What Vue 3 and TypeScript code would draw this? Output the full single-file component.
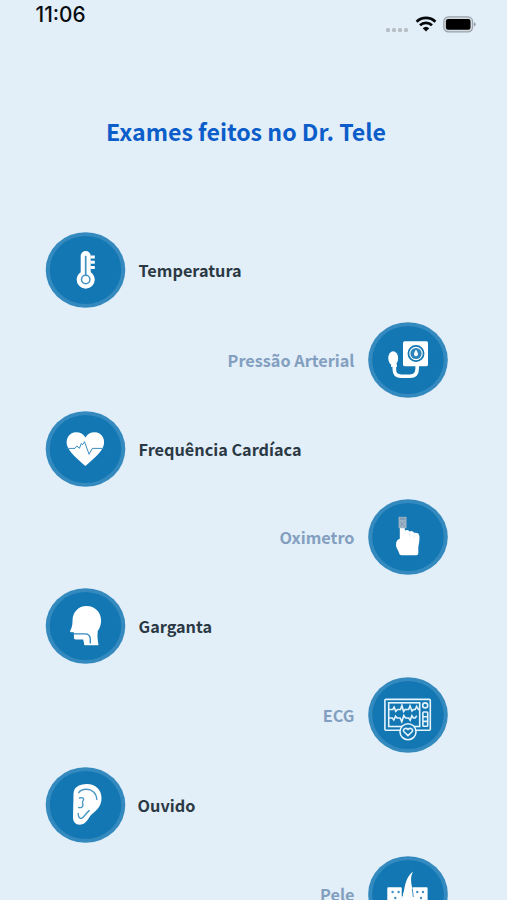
<script setup lang="ts">
type Side = 'left' | 'right'
type Kind = 'temperature' | 'pressure' | 'heart' | 'oximeter' | 'throat' | 'ecg' | 'ear' | 'skin'

interface Exam {
  kind: Kind
  label: string
  side: Side
}

const exams: Exam[] = [
  { kind: 'temperature', label: 'Temperatura', side: 'left' },
  { kind: 'pressure', label: 'Pressão Arterial', side: 'right' },
  { kind: 'heart', label: 'Frequência Cardíaca', side: 'left' },
  { kind: 'oximeter', label: 'Oximetro', side: 'right' },
  { kind: 'throat', label: 'Garganta', side: 'left' },
  { kind: 'ecg', label: 'ECG', side: 'right' },
  { kind: 'ear', label: 'Ouvido', side: 'left' },
  { kind: 'skin', label: 'Pele', side: 'right' },
]
</script>

<template>
  <main class="screen">
    <header class="status">
      <time class="clock">11:06</time>
      <div class="indicators">
        <span class="dots"><i v-for="n in 4" :key="n" class="dot" /></span>
        <svg class="wifi" viewBox="0 0 22 16">
          <path d="M1.6 5.7a13.6 13.6 0 0 1 18.8 0M5 9.3a8.7 8.7 0 0 1 12 0" fill="none" stroke="#05080b" stroke-width="2.7" />
          <path d="M11 15.6 7.7 12.2a4.8 4.8 0 0 1 6.6 0z" fill="#05080b" />
        </svg>
        <svg class="battery" viewBox="0 0 33 17">
          <rect x=".8" y=".8" width="28.8" height="15" rx="4.6" fill="#d3dbe2" stroke="#9ba2a8" stroke-width="1.2" />
          <rect x="2.9" y="2.9" width="24.6" height="10.8" rx="2.2" fill="#000" />
          <path d="M31 6.2q1.6.6 1.6 2.1T31 10.4z" fill="#8e959b" />
        </svg>
      </div>
    </header>

    <h1 class="title">Exames feitos no Dr. Tele</h1>

    <ul class="exams">
      <li v-for="exam in exams" :key="exam.kind" class="exam" :class="[exam.side, exam.kind]">
        <svg class="disc" viewBox="0 0 80 76">
          <ellipse cx="40" cy="38" rx="39.8" ry="37.8" fill="#348abf" />
          <ellipse cx="40" cy="38" rx="35.8" ry="34" fill="#1277b3" />

          <g v-if="exam.kind === 'temperature'">
            <path d="M35.2 24a5 5 0 0 1 10 0v16.2a9 9 0 1 1-10 0z" fill="#fff" />
            <path d="M45 25h4.3M45 30.2h4.3M45 35.5h4.3" stroke="#fff" stroke-width="2.9" />
            <path d="M40.2 24.5v18.3" stroke="#4392c3" stroke-width="1.7" stroke-linecap="round" />
            <circle cx="40.2" cy="47.5" r="4.2" fill="#fff" stroke="#4392c3" stroke-width="1.5" />
          </g>

          <g v-else-if="exam.kind === 'pressure'">
            <rect x="35" y="19.2" width="25" height="25" rx="1.6" fill="#fff" />
            <circle cx="48" cy="31.5" r="7.6" fill="#fff" stroke="#1277b3" stroke-width="1.7" />
            <circle cx="48" cy="31.5" r="5.6" fill="#2c84ba" />
            <path d="M48 27.4c1.3 2.4 2 3.4 2 4.9a2 2 0 0 1-4 0c0-1.5.7-2.5 2-4.9z" fill="#fff" />
            <ellipse cx="25.2" cy="36.2" rx="4.9" ry="7" fill="#fff" />
            <path d="M26.3 41v6.2q0 7 7 7H42q7.2 0 7.2-8V43" fill="none" stroke="#fff" stroke-width="3.6" />
            <path d="M23 43.6h6" stroke="#fff" stroke-width="2.6" />
          </g>

          <g v-else-if="exam.kind === 'heart'">
            <path d="M39.9 55C37 52.2 25.6 43.4 22.4 36.5 18.8 28.8 23.5 21.2 30.6 21.2c4.1 0 7.4 1.9 9.3 5.2 1.9-3.3 5.2-5.2 9.3-5.2 7.1 0 11.8 7.6 8.2 15.3C54.2 43.4 42.8 52.2 39.9 55z" fill="#fff" />
            <path d="M21 37.4h8.500l1.800-2.500 2.600 2.400 1.900-4.800 1.200 1.400 2-3.200 4.600 12.600 3.200-5.900h12" fill="none" stroke="#3a8dc1" stroke-width="1" />
          </g>

          <g v-else-if="exam.kind === 'oximeter'">
            <path d="M31.8 29q2.5-1.2 5 0v2.600q2.900-1.400 4.800.8 3-1.200 4.500 1.400 5.400-.6 5.400 4.200c0 6-1.200 8.400-1.200 12v4.300q0 1.900-1.900 1.900H33.300q-1.700 0-2.200-1.900c-.5-3.100-3.100-4.600-3.100-8.500 0-3.200 1.300-5.200 3.800-6z" fill="#fff" />
            <rect x="30.6" y="17.8" width="7.9" height="11.4" fill="#9db3c4" />
            <rect x="32" y="18.6" width="5.3" height="2.3" fill="#7f9db5" />
            <path d="M32 27.3l4.800-5.100M32.300 23l4.600 4.700" stroke="#7e9db7" stroke-width="1" />
            <path d="M41.700 34v3.500M46.200 35.500V39" stroke="#c2ddee" stroke-width=".6" />
          </g>

          <g v-else-if="exam.kind === 'throat'">
            <path d="M27 33C27 24 33 18 41 18c8.500 0 14.600 6.300 14.600 14.600 0 4.500-1.300 7.300-3.300 10.500-.7 4.800-.1 8.700.7 14.200H38.900c-.6-1.900-.5-4-1.300-5.800H30q-1.600 0-1.600-1.700V44.300h-2.600q-1.700 0-1.100-1.500C26.300 39.400 27 37.500 27 33z" fill="#fff" />
            <path d="M28 45.900h11.500q4.900 0 5.300 4.900v4.600" fill="none" stroke="#3489bd" stroke-width="1.400" />
          </g>

          <g v-else-if="exam.kind === 'ecg'" fill="none" stroke="#e4f3fc" stroke-width="1.600">
            <rect x="16.900" y="22.400" width="45.400" height="30.800" rx="1" />
            <rect x="20.700" y="25.800" width="31" height="23.700" />
            <path d="M21 32.500h3.800l1.300-2.400 1.700 4.200 1.700-1.800h3l1.400-4 1.700 6 1.500-2h3.500l1.400-3.600 2 5.200 1.400-1.600h1.800l1.400-3 1.800 3h1.300M21 41h3.300l1.500 2 1.800-3.700 1.500 1.700h3l1.700 3.700 2-6.100 1.700 2.400h3.200l1.500 2.200 1.700-4.400 1.500 2.200h1.700l1.700-2.200" />
            <circle cx="57.200" cy="28.400" r="2.500" />
            <rect x="54.900" y="35" width="4.800" height="14.200" rx=".8" />
            <path d="M55 39.700h4.700M55 44.400h4.700" />
            <circle cx="40" cy="54.700" r="8" fill="#1277b3" />
            <path d="M40 58.600l-4-3.800c-2-2.300 1.700-4.900 4-2.300 2.300-2.600 6 0 4 2.300z" />
          </g>

          <g v-else-if="exam.kind === 'ear'">
            <path d="M28 27C28 20.800 33 17 41.500 17 50 17 56 22.800 56 31c0 7.500-3.800 11.600-9.700 16.300-3.200 2.600-5.100 10.400-11.900 10.400-4.700 0-6.900-3-6.900-7.700z" fill="#fff" />
            <path d="M33.300 25.700c1.300-2.200 4.200-3.400 7.600-3.400 5.700 0 10 3.800 10.400 10.100M34 31c3.600-1.300 5.200 1 3.400 3.100-1.200 1.400.1 2.600 0 4.200-.3 2-1.900 2.600-4.200 2.200M32.700 46.500c0 3.300 1.300 5.200 3.300 4.800 2.600-.7 3.300-4 7.700-7.700" fill="none" stroke="#4a96c5" stroke-width="1.400" stroke-linecap="round" />
          </g>

          <g v-else>
            <path d="M19.300 32.300q0-1 1-1h12.600q1 0 1 1V60H19.300zM44.600 31.300h14q1 0 1 1V60h-15z" fill="#fff" />
            <path d="M45 15.600c-2.800 6-2.200 11-.4 17.400 1.300 4.300 1.400 9 .9 15H33.700c-1-4.600 1.500-9.500 2.500-14.500C37.700 25.500 39.600 20 45 15.600z" fill="#fff" />
            <path d="M34.300 31v9M44.300 33l1 8" stroke="#1277b3" stroke-width=".8" />
            <g fill="#4191c3">
              <circle cx="24.600" cy="36" r="1.200" /><circle cx="30.600" cy="36" r="1.200" />
              <circle cx="27.300" cy="42" r="1.200" /><circle cx="49.300" cy="36" r="1.200" />
              <circle cx="55" cy="36" r="1.200" /><circle cx="53" cy="42" r="1.200" />
            </g>
          </g>
        </svg>
        <span class="label">{{ exam.label }}</span>
      </li>
    </ul>
  </main>
</template>

<style>
body {
  background: #e2eef8;
}
</style>

<style scoped>
.screen {
  box-sizing: border-box;
  width: 507px;
  height: 900px;
  overflow: hidden;
  background: #e2eef8;
  font-family: "Noto Sans CJK SC", "Noto Sans", sans-serif;
}

.status {
  display: flex;
  justify-content: space-between;
  height: 46px;
  padding: 0 31px 0 35.5px;
}

.clock {
  padding-top: 3px;
  font: 500 20.8px/24px Inter, sans-serif;
  color: #080d12;
}

.indicators {
  display: flex;
  align-items: flex-start;
}

.dots {
  display: flex;
  gap: 2px;
  padding: 28px 7px 0 0;
}

.dot {
  width: 4px;
  height: 4px;
  border-radius: 1.5px;
  background: #b5bdc5;
}

.wifi {
  width: 22px;
  height: 16px;
  margin: 16px 6px 0 0;
}

.battery {
  width: 33px;
  height: 17px;
  margin-top: 16px;
}

.title {
  margin: 65px 0 0;
  padding-right: 15px;
  font-size: 23.15px;
  line-height: 40px;
  font-weight: 700;
  text-align: center;
  white-space: nowrap;
  color: #0b5dc9;
}

.exams {
  display: flex;
  flex-direction: column;
  gap: 13.1px;
  margin: 81.2px 0 0;
  padding: 0 59.5px 0 45px;
  list-style: none;
}

.exam {
  display: flex;
  align-items: center;
  gap: 13.5px;
  height: 76px;
}

.exam.right {
  flex-direction: row-reverse;
  gap: 13px;
}

.exam.pressure {
  margin-top: .4px;
}

.exam.oximeter {
  margin-top: -.5px;
}

.exam.throat {
  margin-top: -.5px;
}

.exam.ecg {
  margin-top: .4px;
}

.exam.ear {
  margin-left: -.4px;
}

.disc {
  flex: none;
  width: 80px;
  height: 76px;
  overflow: visible;
}

.left .disc {
  transform: translateX(.5px);
}

.label {
  font-size: 16.25px;
  line-height: 24px;
  font-weight: 700;
  white-space: nowrap;
  color: #2b3944;
}

.ear .label {
  margin-left: -.6px;
}

.right .label {
  color: #829fbf;
}
</style>
